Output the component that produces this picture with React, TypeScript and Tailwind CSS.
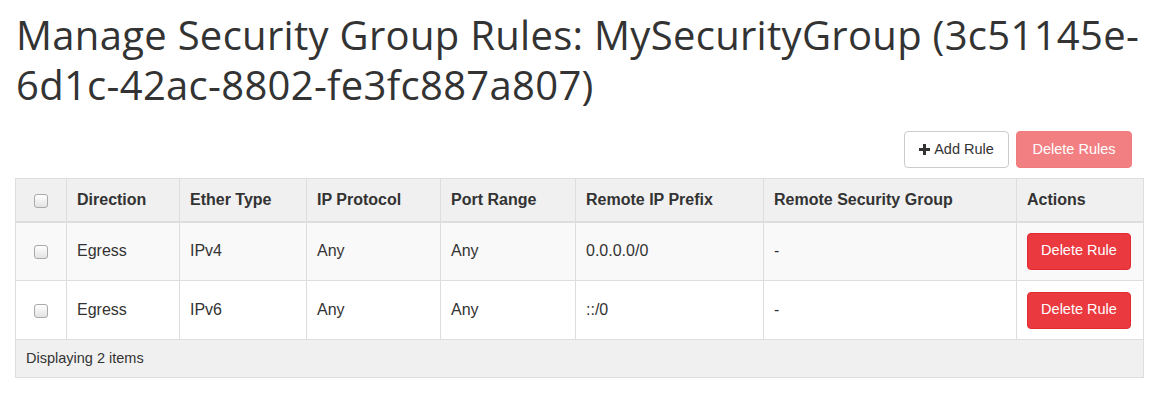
const rules = [
  { dir: "Egress", ether: "IPv4", proto: "Any", port: "Any", prefix: "0.0.0.0/0", group: "-" },
  { dir: "Egress", ether: "IPv6", proto: "Any", port: "Any", prefix: "::/0", group: "-" },
];

function Check() {
  return (
    <span className="inline-block w-[14px] h-[14px] rounded-[3px] border border-[#a9a9a9] bg-gradient-to-b from-white to-[#e3e3e3] align-middle" />
  );
}

export default function App() {
  return (
    <div className="w-[1151px] h-[408px] bg-white text-[#333] pl-[15px] pr-[8px]" style={{ fontFamily: '"Liberation Sans", Arial, sans-serif' }}>
      <h1
        className="pl-[1px] pt-[10px] mr-[-8px] text-[40px] leading-[50px] tracking-[0.3px] font-normal text-[#333]"
        style={{ fontFamily: '"Open Sans", "Noto Sans", sans-serif' }}
      >
        Manage Security Group Rules: MySecurityGroup (3c51145e-6d1c-42ac-8802-fe3fc887a807)
      </h1>

      <div className="flex justify-end gap-[7px] mt-[21px] pr-[11px]">
        <button className="h-[37px] w-[105px] flex items-center justify-center gap-[4px] rounded-[4px] border border-[#ccc] bg-white text-[14.5px] text-[#333]">
          <svg width="11" height="11" viewBox="0 0 11 11">
            <path d="M4 0h3v4h4v3H7v4H4V7H0V4h4z" fill="#333" />
          </svg>
          Add Rule
        </button>
        <button className="h-[37px] w-[116px] rounded-[4px] border border-[#f07b7d] bg-[#f28083] text-[14.5px] text-white">
          Delete Rules
        </button>
      </div>

      <table className="mt-[10px] w-[1128px] table-fixed border-collapse border border-[#ddd] text-[16px]">
        <colgroup>
          <col className="w-[51px]" />
          <col className="w-[113px]" />
          <col className="w-[127px]" />
          <col className="w-[134px]" />
          <col className="w-[135px]" />
          <col className="w-[188px]" />
          <col className="w-[253px]" />
          <col className="w-[127px]" />
        </colgroup>
        <thead>
          <tr className="bg-[#f0f0f0] border-b-2 border-[#ddd] h-[43px]">
            <th className="border-r border-[#ddd] text-center"><Check /></th>
            <th className="border-r border-[#ddd] px-[10px] text-left font-bold">Direction</th>
            <th className="border-r border-[#ddd] px-[10px] text-left font-bold">Ether Type</th>
            <th className="border-r border-[#ddd] px-[10px] text-left font-bold">IP Protocol</th>
            <th className="border-r border-[#ddd] px-[10px] text-left font-bold">Port Range</th>
            <th className="border-r border-[#ddd] px-[10px] text-left font-bold">Remote IP Prefix</th>
            <th className="border-r border-[#ddd] px-[10px] text-left font-bold">Remote Security Group</th>
            <th className="px-[10px] text-left font-bold">Actions</th>
          </tr>
        </thead>
        <tbody>
          {rules.map((r, i) => (
            <tr key={i} className={`border-b border-[#ddd] h-[59px] ${i % 2 === 0 ? "bg-[#f9f9f9]" : "bg-white"}`}>
              <td className="border-r border-[#ddd] text-center"><Check /></td>
              <td className="border-r border-[#ddd] px-[10px]">{r.dir}</td>
              <td className="border-r border-[#ddd] px-[10px]">{r.ether}</td>
              <td className="border-r border-[#ddd] px-[10px]">{r.proto}</td>
              <td className="border-r border-[#ddd] px-[10px]">{r.port}</td>
              <td className="border-r border-[#ddd] px-[10px]">{r.prefix}</td>
              <td className="border-r border-[#ddd] px-[10px]">{r.group}</td>
              <td className="px-[10px]">
                <button className="h-[37px] w-[104px] rounded-[4px] border border-[#e32a30] bg-[#ea3a40] text-[14.5px] text-white">
                  Delete Rule
                </button>
              </td>
            </tr>
          ))}
        </tbody>
        <tfoot>
          <tr className="bg-[#f0f0f0] h-[38px]">
            <td colSpan={8} className="px-[10px] text-[14.5px]">Displaying 2 items</td>
          </tr>
        </tfoot>
      </table>
    </div>
  );
}
